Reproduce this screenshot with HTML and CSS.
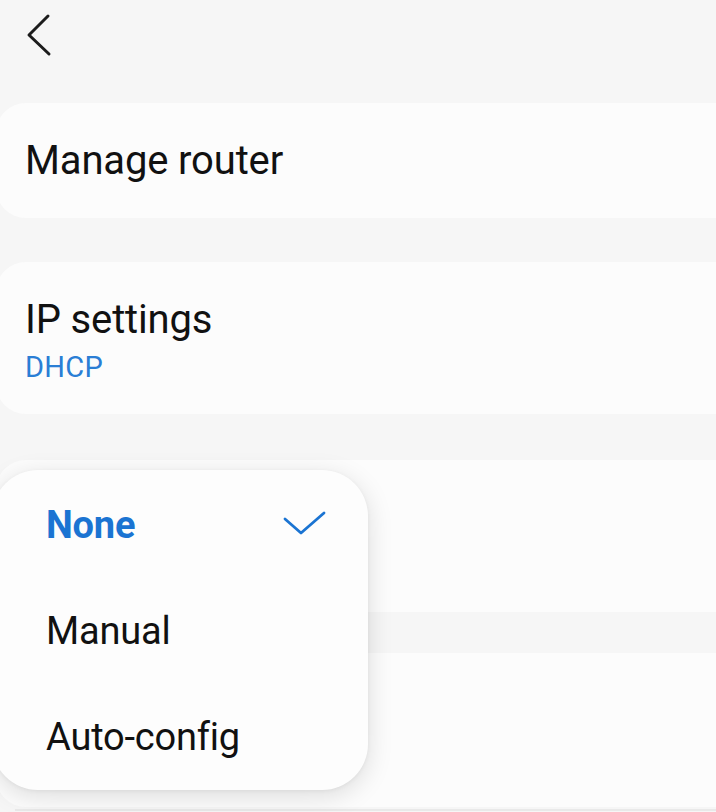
FILE: index.html
```html
<!DOCTYPE html>
<html>
<head>
<meta charset="utf-8">
<link rel="stylesheet" href="styles.css">
</head>
<body>
<div class="screen">
  <header class="topbar">
    <svg class="back" width="30" height="44" viewBox="0 0 30 44"><path d="M24 3 L5 22 L25 41" fill="none" stroke="#1c1c1c" stroke-width="3" stroke-linecap="round" stroke-linejoin="round"/></svg>
  </header>
  <section class="card card-single">
    <div class="title">Manage router</div>
  </section>
  <section class="card card-double">
    <div class="title">IP settings</div>
    <div class="sub">DHCP</div>
  </section>
  <section class="card card-hidden"></section>
  <section class="card card-hidden card-last"></section>
  <div class="divider"></div>

  <div class="popup">
    <div class="item selected">
      <span>None</span>
      <svg class="check" width="44" height="28" viewBox="0 0 44 28"><path d="M2 8 L18 22 L41 2" fill="none" stroke="#1b74d2" stroke-width="2.8" stroke-linecap="round" stroke-linejoin="round"/></svg>
    </div>
    <div class="item">Manual</div>
    <div class="item">Auto-config</div>
  </div>
</div>
</body>
</html>
```
FILE: styles.css
```css
html, body {
  margin: 0;
  padding: 0;
  background: #f6f6f6;
  overflow: hidden;
}
.screen {
  position: relative;
  width: 716px;
  height: 812px;
  overflow: hidden;
  font-family: Roboto, "Noto Sans", sans-serif;
  color: #111;
}
.topbar {
  height: 103px;
  display: flex;
  align-items: flex-start;
}
.back {
  display: block;
  margin: 13px 0 0 24px;
}
.card {
  background: #fcfcfc;
  border-radius: 30px;
  margin: 0 -40px 0 -4px;
  padding-left: 29px;
  box-sizing: border-box;
}
.card-single {
  height: 115px;
  display: flex;
  align-items: center;
}
.card-double {
  height: 152px;
  margin-top: 44px;
  padding-top: 36px;
}
.title {
  font-size: 40px;
  line-height: 44px;
  letter-spacing: -0.15px;
}
.card-single .title {
  line-height: normal;
}
.sub {
  margin-top: 9px;
  font-size: 29px;
  line-height: 32px;
  letter-spacing: 0.3px;
  color: #2a7ed5;
}
.card-hidden {
  height: 152px;
  margin-top: 46px;
}
.card-last {
  margin-top: 41px;
  height: 154px;
}
.divider {
  margin: 2px 0 0 15px;
  height: 2px;
  background: #e9e9e9;
}
.popup {
  position: absolute;
  top: 470px;
  left: -8px;
  width: 376px;
  padding-top: 2px;
  background: #fdfdfd;
  border-radius: 46px;
  box-shadow: 0 6px 26px rgba(0, 0, 0, 0.13), 0 1px 4px rgba(0, 0, 0, 0.05);
}
.item {
  height: 106px;
  display: flex;
  align-items: center;
  justify-content: space-between;
  padding: 0 41px 0 54px;
  font-size: 38px;
  letter-spacing: -0.2px;
  color: #111;
}
.item.selected {
  color: #1b74d2;
  font-weight: 700;
}
.check {
  display: block;
}
```
